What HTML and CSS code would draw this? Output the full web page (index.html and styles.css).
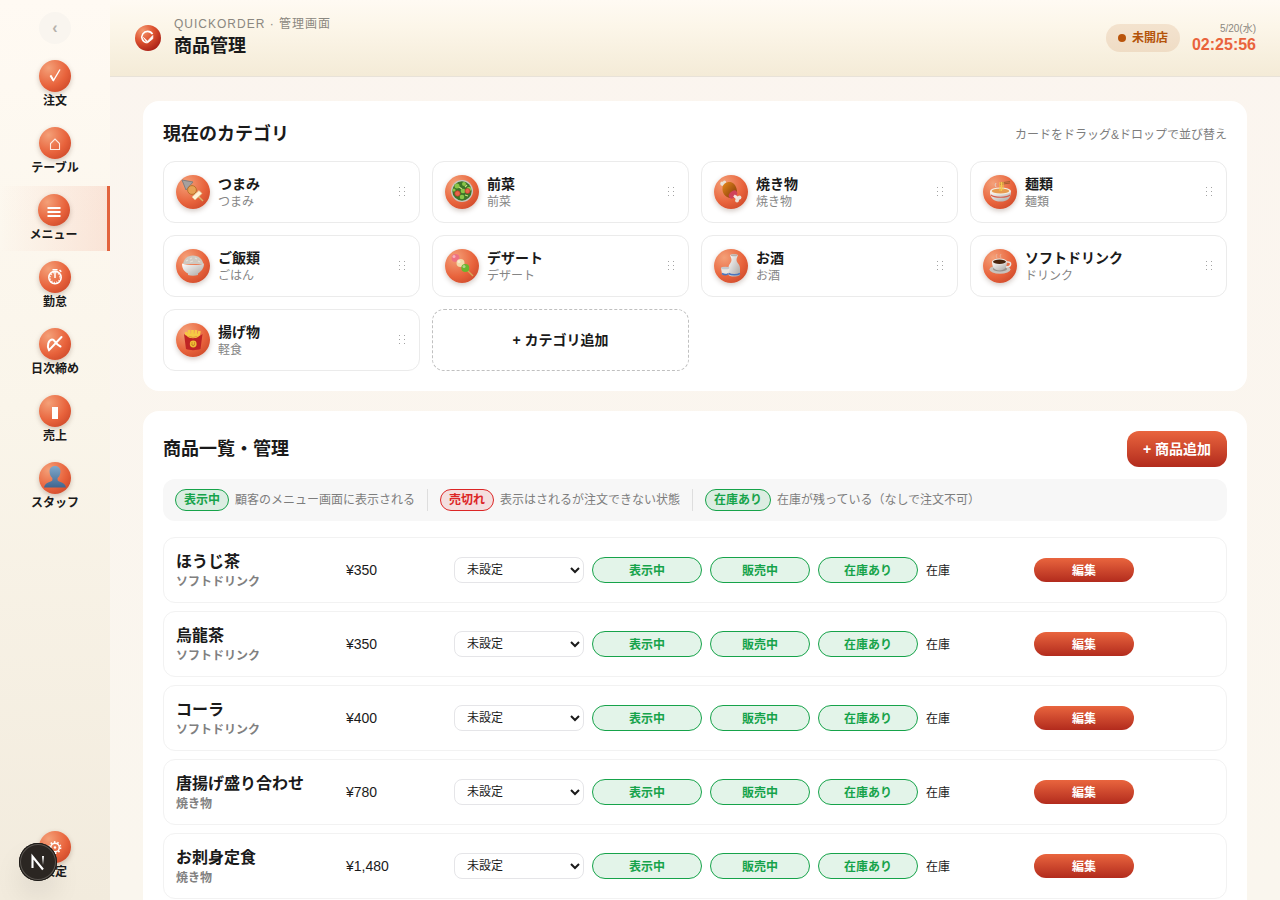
FILE: index.html
```html
<!DOCTYPE html>
<html lang="ja">
<head>
<meta charset="utf-8">
<meta name="viewport" content="width=device-width, initial-scale=1">
<title>商品管理 - QUICKORDER</title>
<link rel="stylesheet" href="styles.css">
</head>
<body>
<svg class="defs" aria-hidden="true">
  <defs>
    <linearGradient id="bowl" x1="0" y1="0" x2="1" y2="1"><stop offset="0" stop-color="#fff"/><stop offset="1" stop-color="#a9a5a2"/></linearGradient>
    <linearGradient id="person" x1="0" y1="0" x2="0" y2="1"><stop offset="0" stop-color="#7fa9cb"/><stop offset="1" stop-color="#41668f"/></linearGradient>
    <linearGradient id="meat" x1="0" y1="0" x2="1" y2="1"><stop offset="0" stop-color="#e88a1c"/><stop offset="1" stop-color="#7d3308"/></linearGradient>
    <linearGradient id="fade" x1="0" y1="0" x2="0" y2="1"><stop offset="0" stop-color="#fff"/><stop offset="1" stop-color="#fff" stop-opacity="0"/></linearGradient>
  </defs>
  <symbol id="grip" viewBox="0 0 8 10"><g fill="#a3a3a3"><path d="M0 0h1v1H0zM5 0h1v1H5zM0 4h1v1H0zM5 4h1v1H5zM0 8h1v1H0zM5 8h1v1H5z"/></g></symbol>
</svg>
<div class="app">
  <aside class="sidebar">
    <button class="collapse" type="button" aria-label="メニューを閉じる">‹</button>
    <nav class="nav">
      <a class="nav-item" href="#orders"><span class="orb"><svg viewBox="0 0 32 32"><path d="M11.500 15.500l3 5L21 9.500" fill="none" stroke="#fff" stroke-width="1.400"/><path d="M11.500 15.500l3 5" stroke="#fff" stroke-width="2"/></svg></span><span class="nav-label">注文</span></a>
      <a class="nav-item" href="#tables"><span class="orb"><svg viewBox="0 0 32 32"><path d="M11.500 22.500v-6l4.500-4.500 4.500 4.500v6z" fill="none" stroke="#fff" stroke-opacity=".85" stroke-width="1.100"/></svg></span><span class="nav-label">テーブル</span></a>
      <a class="nav-item active" href="#menu" aria-current="page"><span class="orb"><svg viewBox="0 0 32 32"><path d="M9.500 14h13M9.500 18h13M9.500 22h13" stroke="#fff" stroke-width="2.200"/></svg></span><span class="nav-label">メニュー</span></a>
      <a class="nav-item" href="#attendance"><span class="orb"><svg viewBox="0 0 32 32"><g fill="none" stroke="#fff"><circle cx="16" cy="16.500" r="6.200" stroke-width="1.500"/><circle cx="16" cy="16.500" r="4.900" stroke-width="1.300" stroke-dasharray="1 1.560"/><path d="M16 10v7M13.500 8.800h5M20.500 9l1.800 1.800" stroke-width="1.500"/></g></svg></span><span class="nav-label">勤怠</span></a>
      <a class="nav-item" href="#closing"><span class="orb"><svg viewBox="0 0 32 32"><path d="M22.500 9L10 22.200C7.500 18 9.500 12 13 11.500c3-.3 2.500 4 8.500 7" fill="none" stroke="#fff" stroke-width="2" stroke-linecap="round"/></svg></span><span class="nav-label">日次締め</span></a>
      <a class="nav-item" href="#sales"><span class="orb"><svg viewBox="0 0 32 32"><path d="M13 12h6v12h-6z" fill="#fff"/></svg></span><span class="nav-label">売上</span></a>
      <a class="nav-item" href="#staff"><span class="orb"><svg viewBox="0 0 32 32"><path d="M16 4c-3.600 0-5.700 2.500-5.400 6 .2 3 1.300 4.700 2.800 6v2.300c-1 1.900-7.400 1.700-8.400 7.200h22c-1-5.500-7.400-5.300-8.400-7.200V16c1.500-1.300 2.600-3 2.800-6 .3-3.500-1.800-6-5.400-6z" fill="url(#person)"/></svg></span><span class="nav-label">スタッフ</span></a>
    </nav>
    <a class="nav-item settings" href="#settings"><span class="orb"><svg viewBox="0 0 32 32"><g fill="none" stroke="#fff"><circle cx="16" cy="16.500" r="4.300" stroke-width="1.500"/><circle cx="16" cy="16.500" r="5.500" stroke-width="1.800" stroke-dasharray="1.500 1.950"/></g><circle cx="16" cy="16.500" r="1.200" fill="#fff"/></svg></span><span class="nav-label">設定</span></a>
  </aside>

  <div class="content">
    <header class="topbar">
      <svg class="logo" viewBox="0 0 28 28" aria-hidden="true">
        <defs><radialGradient id="lg" cx=".3" cy=".22" r=".85"><stop offset="0" stop-color="#f49a70"/><stop offset=".5" stop-color="#dd5230"/><stop offset="1" stop-color="#a81f16"/></radialGradient></defs>
        <circle cx="14" cy="14" r="13" fill="url(#lg)"/>
        <path d="M18.500 10.200a5.700 5.700 0 1 0-5.700 8.500" fill="none" stroke="#fff" stroke-width="1.600"/>
        <path d="M9.500 13.500l4 3.700 5.300-5.700v3.200l-5.300 4.300z" fill="#fff" stroke="#fff" stroke-width=".8" stroke-linejoin="round"/>
      </svg>
      <div class="heading">
        <p class="eyebrow">QUICKORDER · 管理画面</p>
        <h1>商品管理</h1>
      </div>
      <div class="status"><span class="dot"></span>未開店</div>
      <div class="clock"><span class="date">5/20(水)</span><time class="time">02:25:56</time></div>
    </header>

    <main class="main">
      <section class="panel">
        <div class="panel-head cat-head"><h2>現在のカテゴリ</h2><p class="hint">カードをドラッグ&amp;ドロップで並び替え</p></div>
        <div class="cats">
          <article class="cat"><span class="orb"><svg viewBox="0 0 34 34"><path d="M11 10l16 16" stroke="#d8b36e" stroke-width="1.500"/><path d="M6 5l11 2-7 8z" fill="#a5a09e" stroke="#827d7b"/><circle cx="16" cy="15" r="4.400" fill="#e7a253" stroke="#ba722b"/><path d="M16 22l7-6.500 3 3-7 6.500z" fill="#fff4d9" stroke="#e0c189" stroke-width=".7"/></svg></span><div class="cat-text"><h3>つまみ</h3><p>つまみ</p></div><svg class="grip"><use href="#grip"/></svg></article>
          <article class="cat"><span class="orb"><svg viewBox="0 0 34 34"><circle cx="17" cy="16" r="11" fill="#c9c6c0"/><circle cx="17" cy="16" r="9.700" fill="#3c7528"/><g fill="#8ac548"><circle cx="12" cy="11" r="2.500"/><circle cx="19" cy="9" r="2"/><circle cx="24" cy="14" r="2.300"/><circle cx="18" cy="16" r="2.300"/><circle cx="17" cy="22" r="2.300"/><circle cx="9" cy="15" r="1.600"/></g><g fill="#e8664a" stroke="#b93a25" stroke-width=".7"><circle cx="12.500" cy="18.500" r="2.700"/><circle cx="22.500" cy="16" r="2.500"/></g><path d="M14 12l3 2M20 20l3 1M20 12l2-2" stroke="#c9dd80" stroke-width="1.200"/></svg></span><div class="cat-text"><h3>前菜</h3><p>前菜</p></div><svg class="grip"><use href="#grip"/></svg></article>
          <article class="cat"><span class="orb"><svg viewBox="0 0 34 34"><path d="M8 8l4 4M20 20l4 4" stroke="#eee7de" stroke-width="3" stroke-linecap="round"/><g fill="#e9e2da"><circle cx="8" cy="9" r="1.700"/><circle cx="10.500" cy="7" r="1.600"/><circle cx="25.500" cy="22.500" r="1.900"/><circle cx="23" cy="25.500" r="1.900"/></g><path d="M8.500 13c0-4 4-6.500 8-6 4 1 6.500 5 6.500 10-.5 4-3 6.500-7 6-5-1-8-5-7.500-10z" fill="url(#meat)"/><ellipse cx="19" cy="19.500" rx="4.800" ry="3.200" transform="rotate(-40 19 19.500)" fill="#cf425a"/><path d="M20 20.500l3 2.500" stroke="#f7e9e0" stroke-width="2.600"/></svg></span><div class="cat-text"><h3>焼き物</h3><p>焼き物</p></div><svg class="grip"><use href="#grip"/></svg></article>
          <article class="cat"><span class="orb"><svg viewBox="0 0 34 34"><path d="M17 8l10-1.500M17 9.500l10-1.500" stroke="#9c5c2a" stroke-width=".9"/><path d="M7 16c0 8 4 10.500 10.500 10.500S28 24 28 16z" fill="url(#bowl)"/><ellipse cx="17.500" cy="16" rx="10.500" ry="3.600" fill="#f4eee5"/><ellipse cx="17.500" cy="16" rx="8.700" ry="2.500" fill="#e79b4f"/><path d="M17 7v9M18.500 7v9M20 7v8" stroke="#f4cb4c" stroke-width="1"/><path d="M8 20c3 3 16 3 19 0" fill="none" stroke="#d85c4b" stroke-width="1.200"/><path d="M13 12q-2-2 0-4" stroke="#e2cfc5" fill="none"/></svg></span><div class="cat-text"><h3>麺類</h3><p>麺類</p></div><svg class="grip"><use href="#grip"/></svg></article>
          <article class="cat"><span class="orb"><svg viewBox="0 0 34 34"><path d="M7 15c1-5 4-8.500 10-8.500S26 10 27.500 15z" fill="#cfc9c1"/><path d="M10 12l2-1M14 10l2-1M19 9l2 1M22 12l2 1M14 13l3-1" stroke="#e4dfd8" stroke-width="1.100"/><path d="M6 14.500c6 2 16 2 22 0 0 5-3 8-6 10v1.500c-3 1-7 1-10 0v-1.500c-4-2-6-5-6-10z" fill="url(#bowl)"/></svg></span><div class="cat-text"><h3>ご飯類</h3><p>ごはん</p></div><svg class="grip"><use href="#grip"/></svg></article>
          <article class="cat"><span class="orb"><svg viewBox="0 0 34 34"><path d="M20 19l8 8" stroke="#d6a759" stroke-width="1.500"/><circle cx="10.500" cy="9" r="4" fill="#ef7181"/><circle cx="15.500" cy="14" r="4" fill="#f2dbaa"/><circle cx="20.300" cy="19" r="4" fill="#6bb52d"/><g fill="#fff" fill-opacity=".45"><circle cx="9" cy="7.500" r="1.500"/><circle cx="14" cy="12.500" r="1.500"/><circle cx="19" cy="17.500" r="1.500"/></g></svg></span><div class="cat-text"><h3>デザート</h3><p>デザート</p></div><svg class="grip"><use href="#grip"/></svg></article>
          <article class="cat"><span class="orb"><svg viewBox="0 0 34 34"><path d="M16 6c2-1 6-1 8 0-.5 2-1.500 3-1.500 5 0 3 3.500 4 3.500 8v7c-3 2-9 2-11.500 0v-7c0-4 3-5 3-8 0-2-1-3-1.500-5z" fill="url(#bowl)"/><ellipse cx="20" cy="6.300" rx="3.500" ry="1" fill="#b7b1ac"/><path d="M14.500 24.500c3 1.800 8.500 1.800 11.500 0" fill="none" stroke="#4b74bc" stroke-width="1.500"/><path d="M7 19h8.500l-1 6c-2 1.300-5 1.300-6.500 0z" fill="#e8e5e1"/><ellipse cx="11.200" cy="19" rx="4.300" ry="1.300" fill="#c4c8cc"/><path d="M8 24.500c2 1.200 5 1.200 6.500 0" fill="none" stroke="#4b74bc" stroke-width="1.500"/></svg></span><div class="cat-text"><h3>お酒</h3><p>お酒</p></div><svg class="grip"><use href="#grip"/></svg></article>
          <article class="cat"><span class="orb"><svg viewBox="0 0 34 34"><ellipse cx="17" cy="20.500" rx="10.500" ry="4.200" fill="#c8c3be"/><ellipse cx="17" cy="20" rx="7" ry="2.500" fill="#97908b"/><path d="M24 13c5-1 5 5-1 5" fill="none" stroke="#e8e5e2" stroke-width="1.500"/><path d="M9 12.500h15c0 5-2 9-7.500 9S9 17.500 9 12.500z" fill="url(#bowl)"/><ellipse cx="16.500" cy="12.500" rx="7.500" ry="2.900" fill="#eeeae6"/><ellipse cx="16.500" cy="12.700" rx="6.500" ry="2.200" fill="#49250f"/><path d="M14 9q-2-2 0-4M18 9q-2-2 0-4" stroke="#e8c4b4" stroke-opacity=".6" fill="none"/></svg></span><div class="cat-text"><h3>ソフトドリンク</h3><p>ドリンク</p></div><svg class="grip"><use href="#grip"/></svg></article>
          <article class="cat"><span class="orb"><svg viewBox="0 0 34 34"><path d="M10 9l2 9M13 7l1 10M16.500 7v10M20 7l-1 10M23.500 8l-2 9M11 12h12" stroke="#f6c944" stroke-width="2.700"/><path d="M8 11c3 4 15 4 18.500 0L24.500 26c-4 1.500-11 1.500-14.500 0z" fill="#bf2424"/><path d="M10 9c0 7 14 7 14 0l-1 4c-2 3-10 3-12 0z" fill="#f6c944"/><circle cx="17.200" cy="21" r="3.400" fill="#f0bd35"/><path d="M15.500 21.500q1.700 2 3.400 0M16 19.500v1M18.500 19.500v1" fill="none" stroke="#a24d16" stroke-width=".7"/></svg></span><div class="cat-text"><h3>揚げ物</h3><p>軽食</p></div><svg class="grip"><use href="#grip"/></svg></article>
          <button class="cat-add" type="button">+ カテゴリ追加</button>
        </div>
      </section>

      <section class="panel">
        <div class="panel-head"><h2>商品一覧・管理</h2><button class="btn-add" type="button">+ 商品追加</button></div>
        <div class="legend">
          <span class="legend-item"><span class="tag">表示中</span>顧客のメニュー画面に表示される</span>
          <span class="legend-item"><span class="tag tag-red">売切れ</span>表示はされるが注文できない状態</span>
          <span class="legend-item"><span class="tag">在庫あり</span>在庫が残っている（なしで注文不可）</span>
        </div>
        <div class="products">
          <article class="product"><div class="name"><h3>ほうじ茶</h3><p>ソフトドリンク</p></div><span class="price">¥350</span><select aria-label="ほうじ茶の設定"><option>未設定</option></select><button class="toggle" type="button">表示中</button><button class="toggle" type="button">販売中</button><button class="toggle" type="button">在庫あり</button><span class="stock">在庫</span><button class="edit" type="button">編集</button></article>
          <article class="product"><div class="name"><h3>烏龍茶</h3><p>ソフトドリンク</p></div><span class="price">¥350</span><select aria-label="烏龍茶の設定"><option>未設定</option></select><button class="toggle" type="button">表示中</button><button class="toggle" type="button">販売中</button><button class="toggle" type="button">在庫あり</button><span class="stock">在庫</span><button class="edit" type="button">編集</button></article>
          <article class="product"><div class="name"><h3>コーラ</h3><p>ソフトドリンク</p></div><span class="price">¥400</span><select aria-label="コーラの設定"><option>未設定</option></select><button class="toggle" type="button">表示中</button><button class="toggle" type="button">販売中</button><button class="toggle" type="button">在庫あり</button><span class="stock">在庫</span><button class="edit" type="button">編集</button></article>
          <article class="product"><div class="name"><h3>唐揚げ盛り合わせ</h3><p>焼き物</p></div><span class="price">¥780</span><select aria-label="唐揚げ盛り合わせの設定"><option>未設定</option></select><button class="toggle" type="button">表示中</button><button class="toggle" type="button">販売中</button><button class="toggle" type="button">在庫あり</button><span class="stock">在庫</span><button class="edit" type="button">編集</button></article>
          <article class="product"><div class="name"><h3>お刺身定食</h3><p>焼き物</p></div><span class="price">¥1,480</span><select aria-label="お刺身定食の設定"><option>未設定</option></select><button class="toggle" type="button">表示中</button><button class="toggle" type="button">販売中</button><button class="toggle" type="button">在庫あり</button><span class="stock">在庫</span><button class="edit" type="button">編集</button></article>
        </div>
      </section>
    </main>
  </div>
</div>
<button class="dev-badge" type="button" aria-label="開発ツール"><svg viewBox="0 0 38 38"><path d="M13.500 25V13.500L24 26.500" fill="none" stroke="#fff" stroke-width="2.100"/><path d="M23 13h2v9h-2z" fill="url(#fade)"/></svg></button>
</body>
</html>
```

FILE: styles.css
```css
* { box-sizing: border-box; }

body {
  margin: 0;
  color: #1a1a1a;
  font-family: "Liberation Sans", "Noto Sans CJK JP", sans-serif;
  font-size: 12px;
}

h1, h2, h3, p { margin: 0; }
button, select { font-family: inherit; cursor: pointer; }
.defs { position: absolute; width: 0; height: 0; }

.app {
  display: flex;
  height: 100vh;
  background: linear-gradient(#fbf5ef, #faf6ee);
}

/* Sidebar */
.sidebar {
  display: flex;
  flex: 0 0 110px;
  flex-direction: column;
  gap: 8px;
  padding: 12px 0;
  background: linear-gradient(#fffaf3 0%, #faf5ea 45%, #f2ebdd 100%);
}

.collapse {
  align-self: center;
  width: 32px;
  height: 32px;
  padding: 0;
  border: 0;
  border-radius: 50%;
  background: #f9f5ef;
  color: #b5b1ab;
  font-size: 16px;
  font-weight: 700;
  line-height: 32px;
}

.nav {
  display: flex;
  flex-direction: column;
  gap: 2px;
}

.nav-item {
  display: flex;
  flex-direction: column;
  align-items: center;
  padding: 8px 0 6px;
  color: #1a1a1a;
  text-decoration: none;
}

.nav-item.active {
  border-right: 3px solid #e2633d;
  background: linear-gradient(90deg, rgba(232, 99, 61, 0) 0%, rgba(232, 99, 61, .13) 100%);
}

.nav-label {
  font-weight: 700;
  line-height: 19px;
}

.settings { margin-top: auto; }

.orb {
  flex: none;
  width: 32px;
  height: 32px;
  border-radius: 50%;
  background: radial-gradient(circle at 30% 25%, #f4a078 0%, #e8633c 55%, #c23d22 100%);
  box-shadow: 0 2px 5px rgba(80, 40, 20, .25);
}

.orb svg { display: block; width: 100%; height: 100%; }

/* Top bar */
.content {
  display: flex;
  flex: 1;
  flex-direction: column;
  min-width: 0;
}

.topbar {
  display: flex;
  flex: none;
  align-items: center;
  gap: 12px;
  padding: 15px 24px;
  border-bottom: 1px solid #e8e2d8;
  background: linear-gradient(#fffaf3 0%, #fcf6e9 35%, #f4ebd7 100%);
}

.logo { width: 28px; height: 28px; }
.heading { flex: 1; padding-bottom: 2px; }

.eyebrow {
  color: #8b8780;
  letter-spacing: 1px;
  line-height: 18px;
}

h1 { font-size: 18px; line-height: 26px; }

.status {
  display: flex;
  align-items: center;
  gap: 6px;
  height: 28px;
  padding: 0 12px;
  border-radius: 14px;
  background: rgba(180, 83, 9, .12);
  color: #b45309;
  font-weight: 700;
  line-height: 16px;
}

.dot {
  width: 8px;
  height: 8px;
  border-radius: 50%;
  background: #b9540b;
}

.clock {
  display: flex;
  flex-direction: column;
  align-items: flex-end;
}

.date { color: #8b8780; font-size: 10px; line-height: 14px; }

.time {
  color: #e9633c;
  font-size: 16px;
  font-weight: 700;
  line-height: 18px;
}

/* Panels */
.main {
  display: flex;
  flex: 1;
  flex-direction: column;
  gap: 20px;
  min-height: 0;
  padding: 24px 33px;
  overflow-y: auto;
  scrollbar-width: none;
}

.panel {
  flex: none;
  padding: 20px;
  border-radius: 16px;
  background: #fff;
}

.panel-head {
  display: flex;
  align-items: center;
  justify-content: space-between;
  margin-bottom: 12px;
}

.cat-head { margin-bottom: 14px; }
h2 { font-size: 18px; line-height: 26px; }
.hint { padding-bottom: 2px; color: #7d7d7d; }

.cats {
  display: grid;
  grid-template-columns: repeat(4, minmax(0, 1fr));
  gap: 12px;
}

.cat {
  display: flex;
  align-items: center;
  gap: 8px;
  padding: 12px;
  border: 1px solid #ebebeb;
  border-radius: 12px;
}

.cat .orb { width: 34px; height: 34px; }
.cat-text { flex: 1; min-width: 0; }
.cat h3 { font-size: 14px; line-height: 20px; }
.cat p { color: #858585; line-height: 16px; }
.grip { width: 8px; height: 10px; }

.cat-add {
  padding: 0 12px 2px;
  border: 1px dashed #c0c0c0;
  border-radius: 12px;
  background: #fff;
  color: #1a1a1a;
  font-size: 14px;
  font-weight: 700;
}

.btn-add,
.edit {
  border: 0;
  border-radius: 12px;
  background: linear-gradient(#e9653e, #b22b1d);
  color: #fff;
  font-weight: 700;
}

.btn-add {
  height: 36px;
  padding: 0 16px 2px;
  font-size: 14px;
}

.legend {
  display: flex;
  flex-wrap: wrap;
  gap: 12px;
  margin-bottom: 16px;
  padding: 10px 12px;
  border-radius: 12px;
  background: #f7f7f7;
  color: #7d7d7d;
  line-height: 20px;
}

.legend-item {
  display: flex;
  align-items: center;
  gap: 6px;
}

.legend-item + .legend-item {
  padding-left: 12px;
  border-left: 1px solid #dedede;
}

.tag {
  padding: 0 8px;
  border: 1px solid #16a34a;
  border-radius: 11px;
  background: #dcede2;
  color: #16a34a;
  font-weight: 700;
}

.tag-red {
  border-color: #dc2626;
  background: #f4dfdf;
  color: #dc2626;
}

/* Product rows */
.products {
  display: flex;
  flex-direction: column;
  gap: 8px;
}

.product {
  display: grid;
  grid-template-columns: minmax(130px, 9fr) 100px 130px 110px 100px 100px 100px 100px minmax(0, 4fr);
  align-items: center;
  gap: 8px;
  padding: 12px;
  border: 1px solid #f2f2f2;
  border-radius: 12px;
}

.product h3 { font-size: 16px; line-height: 24px; }
.product p { color: #808080; font-weight: 700; line-height: 16px; }
.price { font-size: 14px; }
.stock { padding-bottom: 2px; }

.product select {
  height: 26px;
  padding: 0 0 0 8px;
  border: 1px solid #e5e5e8;
  border-radius: 8px;
  background: #fff;
  color: #1a1a1a;
  font-size: 12px;
}

.toggle {
  height: 26px;
  padding: 0 8px 2px;
  border: 1px solid #16a34a;
  border-radius: 13px;
  background: #e3f4e9;
  color: #16a34a;
  font-size: 12px;
  font-weight: 700;
}

.edit { height: 24px; padding: 0 8px 2px; font-size: 12px; }

/* Floating developer badge */
.dev-badge {
  position: fixed;
  bottom: 19px;
  left: 19px;
  width: 38px;
  height: 38px;
  padding: 0;
  border: 0;
  border-radius: 50%;
  background: #2b2622;
  box-shadow: inset 0 0 0 1px #1a1714, inset 0 0 0 2px #5a5550, 0 16px 32px -8px rgba(0, 0, 0, .24);
}

.dev-badge svg { display: block; width: 38px; height: 38px; }
```
